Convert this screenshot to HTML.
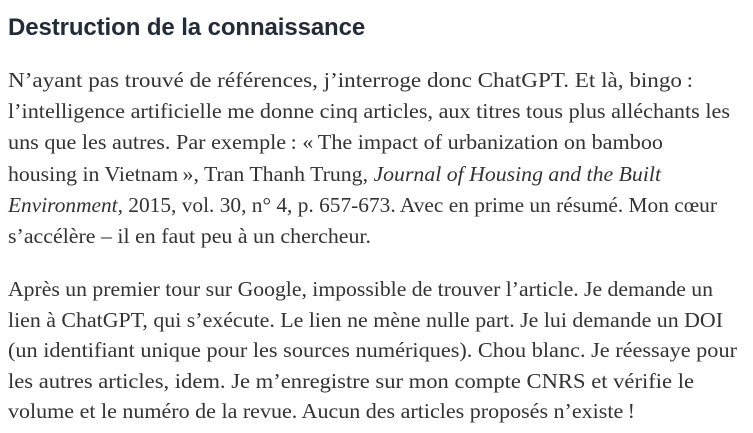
<!DOCTYPE html>
<html><head><meta charset="utf-8"><style>
body{margin:0;background:#fff;width:753px;height:433px;overflow:hidden}
h2{position:absolute;left:8px;top:13px;margin:0;font:bold 24px/30px "Liberation Sans",sans-serif;color:#222b38;white-space:nowrap;letter-spacing:-0.1px}
.p{position:absolute;left:8px;font:21px/31.2px "Liberation Serif",serif;color:#333;white-space:nowrap}
.p div{height:31.2px}
.p span{display:inline-block;transform-origin:left}
</style></head><body>
<h2>Destruction de la connaissance</h2>
<div class="p" style="top:65px">
<div><span data-w="685">N’ayant pas trouvé de références, j’interroge donc ChatGPT. Et là, bingo&#8239;:</span></div>
<div><span data-w="722">l’intelligence artificielle me donne cinq articles, aux titres tous plus alléchants les</span></div>
<div><span data-w="655">uns que les autres. Par exemple&#8239;: «&#8239;The impact of urbanization on bamboo</span></div>
<div><span data-w="653">housing in Vietnam&#8239;», Tran Thanh Trung, <i>Journal of Housing and the Built</i></span></div>
<div><span data-w="709"><i>Environment,</i> 2015, vol. 30, n° 4, p. 657-673. Avec en prime un résumé. Mon cœur</span></div>
<div><span data-w="363">s’accélère – il en faut peu à un chercheur.</span></div>
</div>
<div class="p" style="top:274px;line-height:30.6px">
<div style="height:30.6px"><span data-w="705">Après un premier tour sur Google, impossible de trouver l’article. Je demande un</span></div>
<div style="height:30.6px"><span data-w="715">lien à ChatGPT, qui s’exécute. Le lien ne mène nulle part. Je lui demande un DOI</span></div>
<div style="height:30.6px"><span data-w="729">(un identifiant unique pour les sources numériques). Chou blanc. Je réessaye pour</span></div>
<div style="height:30.6px"><span data-w="686">les autres articles, idem. Je m’enregistre sur mon compte CNRS et vérifie le</span></div>
<div style="height:30.6px"><span data-w="627">volume et le numéro de la revue. Aucun des articles proposés n’existe&#8239;!</span></div>
</div>
<script>
document.querySelectorAll('.p span').forEach(function(s){var w=s.getBoundingClientRect().width;s.style.transform='scaleX('+(+s.dataset.w/w)+')';});
</script>
</body></html>
